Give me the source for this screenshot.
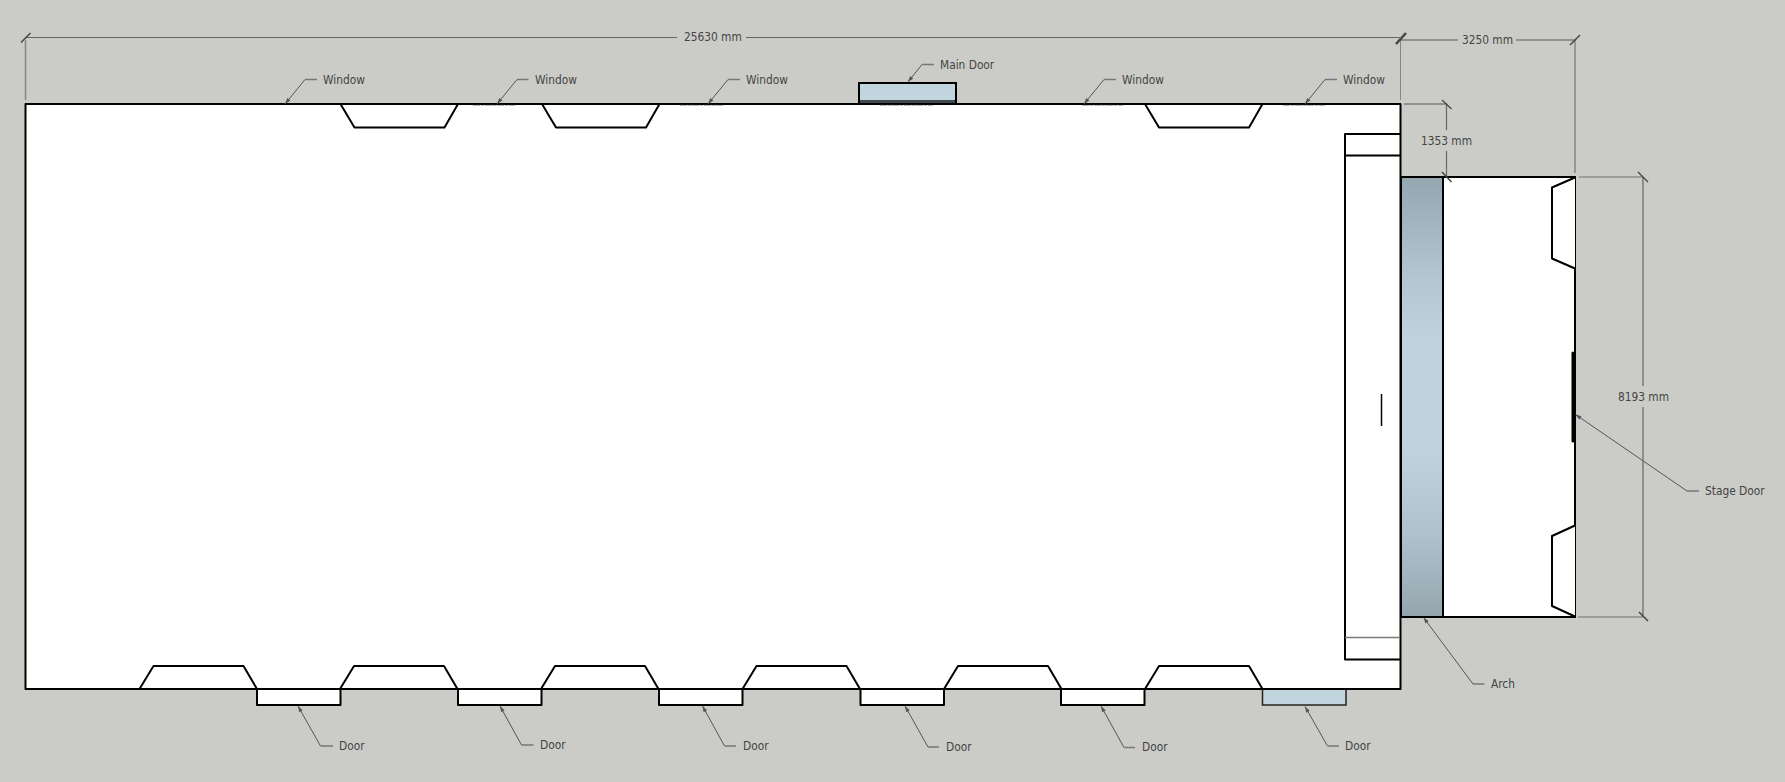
import React from 'react';

type Pt = [number, number];

// leader lines: tip on the object, elbow, end of the short horizontal part
const leaders: [Pt, Pt, number][] = [
  [[285, 104], [305, 79.5], 317],
  [[497, 104], [517, 79.5], 528.5],
  [[708, 104], [728, 79.5], 740],
  [[908, 82], [922, 64.5], 934],
  [[1084, 104], [1104, 79.5], 1116],
  [[1305, 104], [1325, 79.5], 1337],
  [[298, 706], [320.5, 746], 333],
  [[500, 706], [521.5, 745], 533.5],
  [[702.5, 706], [724.5, 746], 736],
  [[905, 706], [928, 747], 939],
  [[1101, 706], [1124, 747.5], 1135],
  [[1305, 706.5], [1327.5, 746], 1339],
  [[1423.5, 617.5], [1473, 684], 1484.5],
  [[1575.5, 414.5], [1687, 491], 1699],
];

const ticks: [Pt, Pt, number][] = [
  [[21, 42.5], [30.5, 33], 1.5],
  [[1396, 44], [1406, 33], 2.5],
  [[1570, 45], [1580, 35], 1.5],
  [[1442, 100], [1451.5, 109], 1.2],
  [[1442, 172], [1451.5, 182], 1.5],
  [[1638, 172], [1648, 182], 1.2],
  [[1639, 612], [1648, 621], 1.5],
];

// windows along the long walls, as left edge of the base
const bottomWindows = [139.5, 340, 541, 742.5, 944, 1145];
const topWindows = [340.5, 542, 1145];
const whiteDoors = [257, 458, 659, 860.5, 1061];

const labels = [
  { text: 'Window', cls: 'left-[323px] top-[81px]' },
  { text: 'Window', cls: 'left-[535px] top-[81px]' },
  { text: 'Window', cls: 'left-[746px] top-[81px]' },
  { text: 'Main Door', cls: 'left-[940px] top-[66px]' },
  { text: 'Window', cls: 'left-[1122px] top-[81px]' },
  { text: 'Window', cls: 'left-[1343px] top-[81px]' },
  { text: 'Door', cls: 'left-[339px] top-[747px]' },
  { text: 'Door', cls: 'left-[540px] top-[746px]' },
  { text: 'Door', cls: 'left-[743px] top-[747px]' },
  { text: 'Door', cls: 'left-[946px] top-[748px]' },
  { text: 'Door', cls: 'left-[1142px] top-[748px]' },
  { text: 'Door', cls: 'left-[1345px] top-[747px]' },
  { text: 'Arch', cls: 'left-[1491px] top-[685px]' },
  { text: 'Stage Door', cls: 'left-[1705px] top-[492px]' },
  { text: '25630 mm', cls: 'left-[684px] top-[38px]' },
  { text: '3250 mm', cls: 'left-[1462px] top-[41px]' },
  { text: '1353 mm', cls: 'left-[1421px] top-[142px]' },
  { text: '8193 mm', cls: 'left-[1618px] top-[398px]' },
];

const arrowHead = (tip: Pt, from: Pt) => {
  const dx = from[0] - tip[0];
  const dy = from[1] - tip[1];
  const len = Math.hypot(dx, dy);
  const ux = dx / len;
  const uy = dy / len;
  const bx = tip[0] + ux * 6;
  const by = tip[1] + uy * 6;
  return `${tip[0]},${tip[1]} ${bx - uy * 2},${by + ux * 2} ${bx + uy * 2},${by - ux * 2}`;
};

const FloorPlan = () => (
  <svg viewBox="0 0 1785 782" className="block w-[1785px] h-[782px]">
    <defs>
      <linearGradient id="arch" x1="0" y1="0" x2="0" y2="1">
        <stop offset="0" stopColor="#94a6af" />
        <stop offset="0.23" stopColor="#b3c7d1" />
        <stop offset="0.37" stopColor="#bfd3dd" />
        <stop offset="0.62" stopColor="#bfd3dd" />
        <stop offset="0.82" stopColor="#aec1cb" />
        <stop offset="1" stopColor="#94a5ad" />
      </linearGradient>
    </defs>

    {/* extension lines */}
    <g fill="none" stroke="#858585" strokeWidth="1.5">
      <path d="M25.5 40V100" />
      <path d="M1575 40V173" />
      <path d="M1400.5 38V100" strokeWidth="1" />
    </g>
    <g fill="none" stroke="#555" strokeWidth="1">
      <path d="M1404 104H1447" />
      <path d="M1579 177H1643" stroke="#707070" />
      <path d="M1578 617H1643" stroke="#707070" />
    </g>

    {/* dimension lines */}
    <g fill="none" stroke="#666" strokeWidth="1.2">
      <path d="M25.5 37.5H677M746 37.5H1400" />
      <path d="M1400 40H1458M1516 40H1575" stroke="#808080" strokeWidth="1.5" />
      <path d="M1446.5 104V130M1446.5 151V177" />
      <path d="M1643 177V386M1643 407V617" />
    </g>

    {/* doors that stick out of the walls */}
    <g fill="#fff" stroke="#000" strokeWidth="2" strokeLinejoin="round">
      {whiteDoors.map((x) => (
        <rect key={x} x={x} y={689} width={83.5} height={16} />
      ))}
    </g>
    <rect x="1262.5" y="689" width="83.5" height="16" fill="#c1d5de" stroke="#222" strokeWidth="1.5" />
    <rect x="859" y="83" width="97" height="21" fill="#c1d5de" stroke="#000" strokeWidth="2" />
    <rect x="860" y="100" width="95" height="4" fill="#3f4a4f" />

    {/* stage */}
    <rect x="1443" y="177" width="132" height="440" fill="#fff" stroke="#000" strokeWidth="2" />
    <rect x="1401" y="177" width="42" height="440" fill="url(#arch)" stroke="#000" strokeWidth="2" />
    <g fill="#fff" stroke="#000" strokeWidth="2" strokeLinejoin="round">
      <path d="M1575 177.5L1552 187.5V258.5L1575 268.5" />
      <path d="M1575 525.5L1552 536V606L1575 616.5" />
    </g>
    <path d="M1573 353V441" stroke="#000" strokeWidth="3" strokeLinecap="round" />

    {/* main hall */}
    <rect x="25.5" y="104" width="1375" height="585" fill="#fff" />
    <g fill="#fff" stroke="#000" strokeWidth="2" strokeLinejoin="round">
      {bottomWindows.map((x) => (
        <path key={x} d={`M${x} 689L${x + 14} 666H${x + 104} L${x + 117.5} 689`} />
      ))}
      {topWindows.map((x) => (
        <path key={x} d={`M${x} 104L${x + 14} 127.5H${x + 104} L${x + 117.5} 104`} />
      ))}
      <path d="M1400 134H1345V659.5H1400" />
      <path d="M1345 155.5H1400" />
    </g>
    <rect x="25.5" y="104" width="1375" height="585" fill="none" stroke="#000" strokeWidth="2" strokeLinejoin="round" />
    <path d="M1345 637.5H1400" stroke="#7a7a7a" strokeWidth="1.5" />
    <path d="M1381.5 394V426" stroke="#000" strokeWidth="1.5" />

    {/* remains of text that sits behind the wall */}
    <g stroke="#999" strokeWidth="0.8" strokeDasharray="7 1 3 1">
      <path d="M473 105.4H515" />
      <path d="M680 105.4H723" />
      <path d="M880 105.4H933" />
      <path d="M1082 105.4H1123" />
      <path d="M1283 105.4H1325" />
    </g>

    {/* leaders */}
    {leaders.map(([tip, elbow, end], i) => (
      <g key={i}>
        <path d={`M${tip[0]} ${tip[1]}L${elbow[0]} ${elbow[1]}`} stroke="#555" strokeWidth="1" fill="none" />
        <path d={`M${elbow[0]} ${elbow[1]}H${end}`} stroke="#777" strokeWidth="1.5" fill="none" />
        <polygon points={arrowHead(tip, elbow)} fill="#555" />
      </g>
    ))}

    {ticks.map(([a, b, w], i) => (
      <path key={i} d={`M${a[0]} ${a[1]}L${b[0]} ${b[1]}`} stroke="#444" strokeWidth={w} />
    ))}
  </svg>
);

export default function App() {
  return (
    <div className="relative w-[1785px] h-[782px] overflow-hidden bg-[#cbccc7] font-['DejaVu_Sans_Condensed','DejaVu_Sans',sans-serif] text-[11.8px] leading-none text-[#444]">
      <FloorPlan />
      {labels.map((l, i) => (
        <span key={i} className={`absolute -translate-y-1/2 whitespace-nowrap ${l.cls}`}>
          {l.text}
        </span>
      ))}
    </div>
  );
}
